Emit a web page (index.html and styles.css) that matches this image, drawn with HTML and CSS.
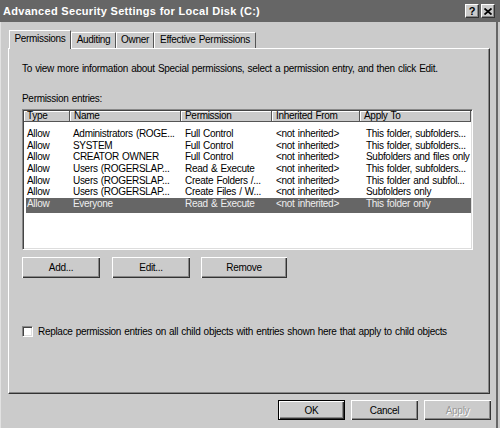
FILE: index.html
```html
<!DOCTYPE html>
<html>
<head>
<meta charset="utf-8">
<link rel="stylesheet" href="styles.css">
</head>
<body>
<div class="window">
  <div class="titlebar">
    <span class="title">Advanced Security Settings for Local Disk (C:)</span>
    <div class="tbtns">
      <span class="tbtn">?</span>
      <span class="tbtn"><svg width="8" height="7" viewBox="0 0 8 7"><path d="M0.5 0.5L7.5 6.5M7.5 0.5L0.5 6.5" stroke="#000" stroke-width="1.8"/></svg></span>
    </div>
  </div>
  <div class="frame">
    <div class="tabs">
      <div class="tab active t1">Permissions</div>
      <div class="tab t2">Auditing</div>
      <div class="tab t3">Owner</div>
      <div class="tab t4">Effective Permissions</div>
    </div>
    <div class="panel">
      <p class="info">To view more information about Special permissions, select a permission entry, and then click Edit.</p>
      <p class="label">Permission entries:</p>
      <div class="list">
        <div class="row head">
          <div>Type</div><div>Name</div><div>Permission</div><div>Inherited From</div><div>Apply To</div>
        </div>
        <div class="rows">
          <div class="row"><div>Allow</div><div>Administrators (ROGE...</div><div>Full Control</div><div>&lt;not inherited&gt;</div><div>This folder, subfolders...</div></div>
          <div class="row"><div>Allow</div><div>SYSTEM</div><div>Full Control</div><div>&lt;not inherited&gt;</div><div>This folder, subfolders...</div></div>
          <div class="row"><div>Allow</div><div>CREATOR OWNER</div><div>Full Control</div><div>&lt;not inherited&gt;</div><div>Subfolders and files only</div></div>
          <div class="row"><div>Allow</div><div>Users (ROGERSLAP...</div><div>Read &amp; Execute</div><div>&lt;not inherited&gt;</div><div>This folder, subfolders...</div></div>
          <div class="row"><div>Allow</div><div>Users (ROGERSLAP...</div><div>Create Folders /...</div><div>&lt;not inherited&gt;</div><div>This folder and subfol...</div></div>
          <div class="row"><div>Allow</div><div>Users (ROGERSLAP...</div><div>Create Files / W...</div><div>&lt;not inherited&gt;</div><div>Subfolders only</div></div>
          <div class="row sel"><div>Allow</div><div>Everyone</div><div>Read &amp; Execute</div><div>&lt;not inherited&gt;</div><div>This folder only</div></div>
        </div>
      </div>
      <div class="btnrow">
        <button class="btn b-add">Add...</button>
        <button class="btn b-edit">Edit...</button>
        <button class="btn b-remove">Remove</button>
      </div>
      <div class="check"><span class="box"></span><span>Replace permission entries on all child objects with entries shown here that apply to child objects</span></div>
    </div>
    <div class="dlgbtns">
      <button class="btn dlg default">OK</button>
      <button class="btn dlg">Cancel</button>
      <button class="btn dlg disabled">Apply</button>
    </div>
  </div>
</div>
</body>
</html>
```
FILE: styles.css
```css
* { box-sizing: border-box; }
html, body { margin: 0; padding: 0; }
body {
  width: 500px;
  height: 428px;
  overflow: hidden;
  background: #cbcbcb;
  font-family: "Liberation Sans", Arial, sans-serif;
  font-size: 10px;
  letter-spacing: -0.3px;
  word-spacing: 0.7px;
  color: #000;
}
.window {
  width: 500px;
  height: 428px;
  display: flex;
  flex-direction: column;
}
.titlebar {
  height: 22px;
  flex: none;
  background: #666;
  display: flex;
  align-items: center;
  padding: 0 5px 0 3px;
}
.title {
  flex: 1;
  color: #fff;
  font-weight: bold;
  font-size: 11px;
  letter-spacing: 0.3px;
  word-spacing: 0;
}
.tbtns { display: flex; gap: 2px; }
.tbtn {
  width: 14px;
  height: 14px;
  background: #cbcbcb;
  border: 1px solid;
  border-color: #fff #333 #333 #fff;
  box-shadow: inset -1px -1px #888;
  display: flex;
  align-items: center;
  justify-content: center;
  font-weight: bold;
  font-size: 11px;
  letter-spacing: 0;
}
.frame {
  flex: 1;
  width: 498px;
  border-left: 1px solid #e2e2e2;
  border-right: 2px solid #666;
  padding: 8px 0 0 7px;
}
.tabs {
  display: flex;
  align-items: flex-end;
  height: 18px;
  padding-left: 1px;
  position: relative;
  z-index: 1;
}
.tab {
  height: 16px;
  border: 1px solid;
  border-color: #fff #555 transparent #fff;
  border-bottom: none;
  text-align: center;
  line-height: 14px;
  white-space: nowrap;
}
.tab.active {
  height: 19px;
  margin-bottom: -1px;
  background: #cbcbcb;
  line-height: 15px;
}
.t1 { width: 62px; }
.t2 { width: 45px; }
.t3 { width: 38px; }
.t4 { width: 102px; }
.panel {
  width: 482px;
  height: 346px;
  border: 1px solid;
  border-color: #fff #333 #333 #fff;
  box-shadow: inset -1px -1px #888;
  padding: 14px 0 0 13px;
}
.info, .label {
  margin: 0;
  line-height: 12px;
  white-space: nowrap;
}
.label { margin-top: 18px; }
.list {
  margin-top: 4px;
  width: 451px;
  height: 141px;
  background: #fff;
  border: 1px solid;
  border-color: #888 #fff #fff #888;
  box-shadow: inset 1px 1px #444, inset -1px -1px #ddd;
  padding: 1px;
}
.row {
  display: grid;
  grid-template-columns: 46px 111px 91px 88px 111px;
  height: 11.67px;
  line-height: 11.67px;
  white-space: nowrap;
}
.row > div { overflow: hidden; }
.row > div:nth-child(1) { padding-left: 3px; }
.row > div:nth-child(2) { padding-left: 3px; }
.row > div:nth-child(3) { padding-left: 4px; }
.row > div:nth-child(4) { padding-left: 4px; }
.row > div:nth-child(5) { padding-left: 6px; }
.row.head { height: 11px; line-height: 10px; }
.row.head > div {
  background: #cbcbcb;
  border-right: 1px solid #555;
  border-bottom: 1px solid #555;
  box-shadow: inset 1px 1px #fff;
  padding-left: 4px;
}
.row.head > div:nth-child(1) { padding-left: 3px; }
.rows { padding-top: 6px; }
.row.sel {
  height: 15px;
  color: #eee;
  background: linear-gradient(to right, transparent 2px, #666 2px);
}
.btnrow {
  display: flex;
  margin-top: 7px;
}
.btn {
  font: inherit;
  letter-spacing: inherit;
  word-spacing: inherit;
  color: #000;
  background: #cbcbcb;
  border: none;
  padding: 0;
  height: 21px;
  box-shadow: inset 1px 1px #fff, inset -1px -1px #333, inset -2px -2px #888;
}
.b-add { width: 78px; }
.b-edit { width: 78px; margin-left: 12px; }
.b-remove { width: 86px; margin-left: 11px; }
.check {
  display: flex;
  align-items: center;
  gap: 5px;
  margin-top: 48px;
  white-space: nowrap;
}
.box {
  width: 11px;
  height: 11px;
  background: #fff;
  border: 1px solid;
  border-color: #888 #fff #fff #888;
  box-shadow: inset 1px 1px #444, inset -1px -1px #ddd;
}
.dlgbtns {
  width: 483px;
  display: flex;
  justify-content: flex-end;
  gap: 6px;
  margin-top: 6px;
}
.btn.dlg { width: 67px; height: 20px; }
.btn.default {
  border: 1px solid #000;
  box-shadow: inset 1px 1px #fff, inset -1px -1px #333, inset -2px -2px #888;
}
.btn.disabled {
  color: #999;
  text-shadow: 1px 1px #fff;
}
```
